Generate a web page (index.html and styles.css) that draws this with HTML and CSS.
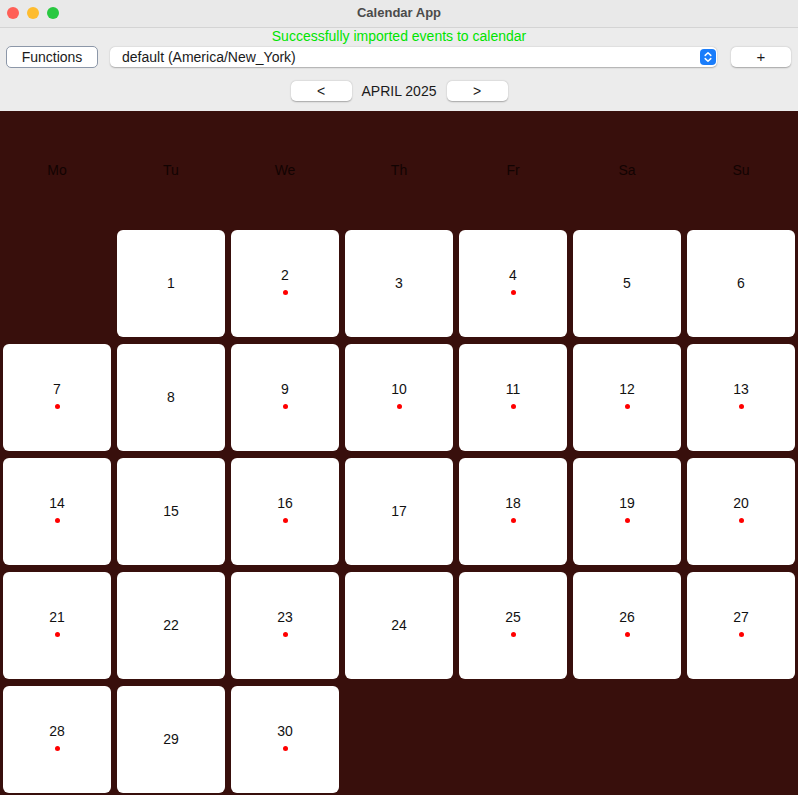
FILE: index.html
```html
<!DOCTYPE html>
<html>
<head>
<meta charset="utf-8">
<link rel="stylesheet" href="styles.css">
</head>
<body>
<div class="window">
  <div class="titlebar">
    <div class="lights">
      <span class="light red"></span>
      <span class="light yellow"></span>
      <span class="light green"></span>
    </div>
    <div class="title">Calendar App</div>
  </div>
  <div class="status">Successfully imported events to calendar</div>
  <div class="toolbar">
    <button class="btn functions">Functions</button>
    <div class="select">
      <span class="select-text">default (America/New_York)</span>
      <span class="select-arrow">
        <svg width="16" height="16" viewBox="0 0 16 16">
          <rect x="0" y="0" width="16" height="16" rx="4" fill="#1a7dfb"/>
          <path d="M5.2 6.4 L8 3.8 L10.8 6.4" fill="none" stroke="#fff" stroke-width="1.5" stroke-linecap="round" stroke-linejoin="round"/>
          <path d="M5.2 9.6 L8 12.2 L10.8 9.6" fill="none" stroke="#fff" stroke-width="1.5" stroke-linecap="round" stroke-linejoin="round"/>
        </svg>
      </span>
    </div>
    <button class="btn plus">+</button>
  </div>
  <div class="nav">
    <button class="btn navbtn">&lt;</button>
    <span class="month">APRIL 2025</span>
    <button class="btn navbtn">&gt;</button>
  </div>
  <div class="calendar">
    <div class="grid">
      <div class="dow">Mo</div>
      <div class="dow">Tu</div>
      <div class="dow">We</div>
      <div class="dow">Th</div>
      <div class="dow">Fr</div>
      <div class="dow">Sa</div>
      <div class="dow">Su</div>

      <div class="empty"></div>
      <div class="day"><span class="num">1</span></div>
      <div class="day ev"><span class="num">2</span><span class="dotrow"><span class="dot"></span></span></div>
      <div class="day"><span class="num">3</span></div>
      <div class="day ev"><span class="num">4</span><span class="dotrow"><span class="dot"></span></span></div>
      <div class="day"><span class="num">5</span></div>
      <div class="day"><span class="num">6</span></div>

      <div class="day ev"><span class="num">7</span><span class="dotrow"><span class="dot"></span></span></div>
      <div class="day"><span class="num">8</span></div>
      <div class="day ev"><span class="num">9</span><span class="dotrow"><span class="dot"></span></span></div>
      <div class="day ev"><span class="num">10</span><span class="dotrow"><span class="dot"></span></span></div>
      <div class="day ev"><span class="num">11</span><span class="dotrow"><span class="dot"></span></span></div>
      <div class="day ev"><span class="num">12</span><span class="dotrow"><span class="dot"></span></span></div>
      <div class="day ev"><span class="num">13</span><span class="dotrow"><span class="dot"></span></span></div>

      <div class="day ev"><span class="num">14</span><span class="dotrow"><span class="dot"></span></span></div>
      <div class="day"><span class="num">15</span></div>
      <div class="day ev"><span class="num">16</span><span class="dotrow"><span class="dot"></span></span></div>
      <div class="day"><span class="num">17</span></div>
      <div class="day ev"><span class="num">18</span><span class="dotrow"><span class="dot"></span></span></div>
      <div class="day ev"><span class="num">19</span><span class="dotrow"><span class="dot"></span></span></div>
      <div class="day ev"><span class="num">20</span><span class="dotrow"><span class="dot"></span></span></div>

      <div class="day ev"><span class="num">21</span><span class="dotrow"><span class="dot"></span></span></div>
      <div class="day"><span class="num">22</span></div>
      <div class="day ev"><span class="num">23</span><span class="dotrow"><span class="dot"></span></span></div>
      <div class="day"><span class="num">24</span></div>
      <div class="day ev"><span class="num">25</span><span class="dotrow"><span class="dot"></span></span></div>
      <div class="day ev"><span class="num">26</span><span class="dotrow"><span class="dot"></span></span></div>
      <div class="day ev"><span class="num">27</span><span class="dotrow"><span class="dot"></span></span></div>

      <div class="day ev"><span class="num">28</span><span class="dotrow"><span class="dot"></span></span></div>
      <div class="day"><span class="num">29</span></div>
      <div class="day ev"><span class="num">30</span><span class="dotrow"><span class="dot"></span></span></div>
    </div>
  </div>
</div>
</body>
</html>
```
FILE: styles.css
```css
* { box-sizing: border-box; }
html, body {
  margin: 0;
  padding: 0;
}
body {
  width: 798px;
  height: 795px;
  overflow: hidden;
  background: #ececec;
  font-family: "Liberation Sans", Arial, sans-serif;
  color: #1a1a1a;
}
.window {
  display: flex;
  flex-direction: column;
  height: 795px;
}
.titlebar {
  position: relative;
  height: 28px;
  background: #e9e9e9;
  border-bottom: 1px solid #d4d4d4;
  display: flex;
  align-items: center;
  justify-content: center;
}
.lights {
  position: absolute;
  left: 7px;
  top: 7px;
  display: flex;
  gap: 8px;
}
.light {
  width: 12px;
  height: 12px;
  border-radius: 50%;
  display: block;
}
.light.red { background: #ff5f57; }
.light.yellow { background: #febc2e; }
.light.green { background: #28c840; }
.title {
  font-size: 13px;
  font-weight: 700;
  color: #4b4b4b;
  margin-top: -3px;
}
.status {
  height: 17px;
  text-align: center;
  color: #00e400;
  font-size: 14px;
  line-height: 17px;
}
.toolbar {
  display: flex;
  align-items: center;
  padding: 1px 7px 0 6px;
  height: 22px;
}
.btn {
  font-family: inherit;
  font-size: 14px;
  color: #1a1a1a;
  background: #fff;
  border: none;
  border-radius: 5px;
  box-shadow: 0 0.5px 1.5px rgba(0,0,0,0.3);
  padding: 0;
  margin: 0;
  cursor: default;
}
.functions {
  width: 92px;
  height: 22px;
  border: 1.5px solid #8c97a8;
  box-shadow: none;
  border-radius: 5px;
}
.select {
  margin-left: 12px;
  width: 607px;
  height: 20px;
  background: #fff;
  border-radius: 5px;
  box-shadow: 0 0.5px 1.5px rgba(0,0,0,0.28);
  display: flex;
  align-items: center;
  justify-content: space-between;
  padding: 0 1px 0 12px;
  font-size: 14px;
}
.select-arrow { display: flex; }
.plus {
  margin-left: 14px;
  width: 60px;
  height: 20px;
  font-size: 15px;
}
.nav {
  display: flex;
  justify-content: center;
  align-items: center;
  margin-top: 14px;
  height: 20px;
  gap: 0;
}
.navbtn {
  width: 61px;
  height: 20px;
  font-size: 14px;
}
.month {
  font-size: 14px;
  width: 95px;
  text-align: center;
}
.calendar {
  margin-top: 10px;
  flex: 1;
  background: #380f0c;
  padding: 5px 3px 0 3px;
}
.grid {
  display: grid;
  grid-template-columns: repeat(7, 108px);
  grid-template-rows: repeat(6, 107px);
  column-gap: 6px;
  row-gap: 7px;
}
.dow {
  display: flex;
  align-items: center;
  justify-content: center;
  font-size: 14px;
  color: #120302;
}
.day {
  background: #fff;
  border-radius: 6px;
  display: flex;
  flex-direction: column;
  align-items: center;
  justify-content: center;
  font-size: 14px;
  color: #111;
}
.num {
  line-height: 17px;
  height: 17px;
}
.dotrow {
  height: 17px;
  display: flex;
  align-items: center;
  justify-content: center;
}
.dot {
  width: 5px;
  height: 5px;
  border-radius: 50%;
  background: #f00;
  display: block;
}
```
